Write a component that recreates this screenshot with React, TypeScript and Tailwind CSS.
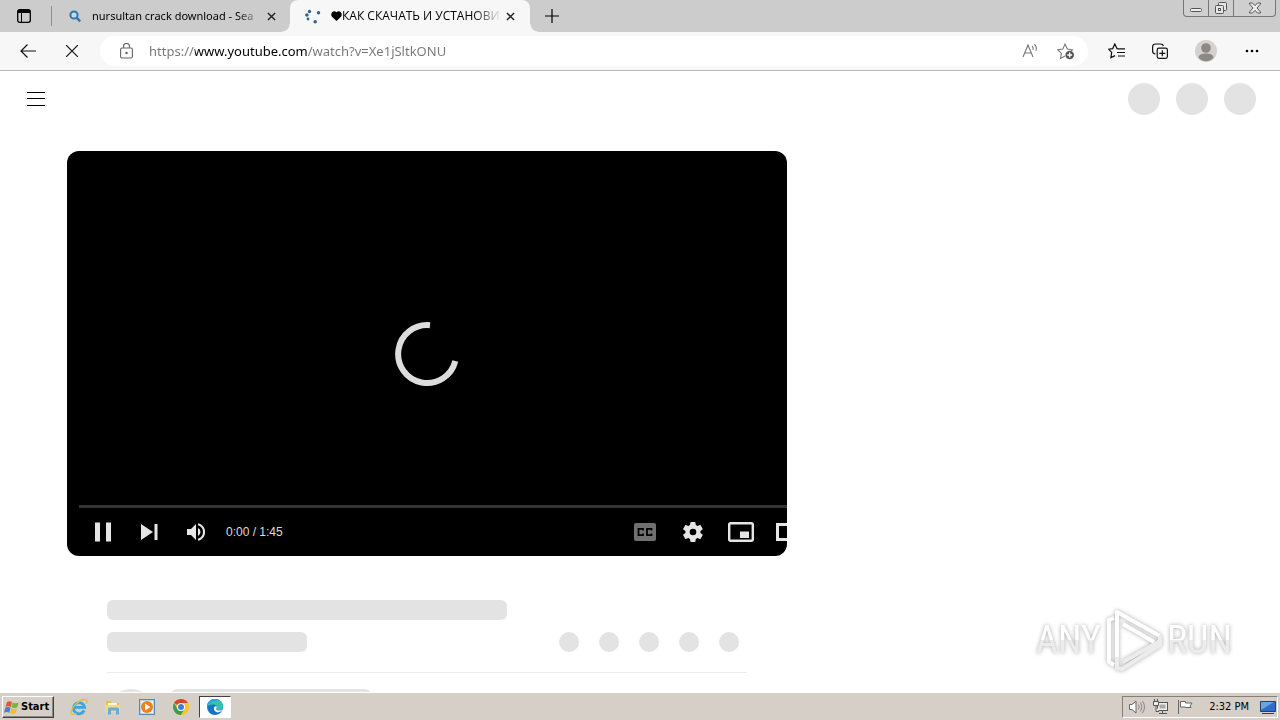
import type { ReactNode } from "react";

const UI_FONT = "font-['Open_Sans','Noto_Sans',sans-serif]";

function IconButton({ label, className, children }: { label: string; className: string; children: ReactNode }) {
  return (
    <button type="button" aria-label={label} className={`flex shrink-0 items-center justify-center ${className}`}>
      {children}
    </button>
  );
}

function CloseIcon() {
  return (
    <svg width="9" height="9" viewBox="0 0 10 10" stroke="#222" strokeWidth="1.6">
      <path d="M1 1l8 8M9 1L1 9" />
    </svg>
  );
}

function TabStrip() {
  return (
    <div className="flex h-8 shrink-0 items-start bg-[#cccccc]">
      <IconButton label="Tab actions" className="h-8 w-12">
        <svg width="14" height="14" viewBox="0 0 14 14" fill="none" stroke="#000">
          <rect x=".7" y=".7" width="12.6" height="12.6" rx="2" strokeWidth="1.3" />
          <path d="M1 2.5h12" strokeWidth="3" />
          <path d="M4.5 4v9" />
        </svg>
      </IconButton>
      <div className="mt-1.5 ml-[3px] h-5 w-px bg-[#8f8f8f]" />

      {/* Background tab */}
      <div className="flex h-8 w-[238px] shrink-0 items-center pl-4">
        <svg className="shrink-0" width="14" height="16" viewBox="0 0 14 16" fill="none" stroke="#3475ad" strokeWidth="2">
          <circle cx="6" cy="7" r="3.6" fill="#b9ddf4" />
          <path d="M8.6 9.6l3.6 3.8" strokeWidth="2.4" />
        </svg>
        <span className="ml-2.5 w-[168px] font-['Noto_Sans',sans-serif] text-[11px] leading-4 whitespace-nowrap text-black [mask-image:linear-gradient(90deg,#000_145px,transparent_170px)]">
          nursultan crack download - Sea
        </span>
        <IconButton label="Close tab" className="ml-px size-5">
          <CloseIcon />
        </IconButton>
      </div>

      {/* Active tab */}
      <div className="relative flex h-8 w-60 shrink-0 items-center rounded-t-lg bg-[#f7f7f7] pl-[15px]">
        <span className="absolute bottom-0 -left-2 size-2 bg-[radial-gradient(circle_at_0_0,#cccccc_7px,#f7f7f7_8px)]" />
        <span className="absolute -right-2 bottom-0 size-2 bg-[radial-gradient(circle_at_100%_0,#cccccc_7px,#f7f7f7_8px)]" />
        <svg className="shrink-0" width="16" height="16" viewBox="0 0 16 16" fill="#2b6695">
          <circle cx="4.5" cy="3.5" r="1.7" />
          <circle cx="1.9" cy="7" r="1.8" />
          <circle cx="3" cy="11" r="1.4" />
          <circle cx="13.5" cy="4.8" r="1.7" />
          <circle cx="10.2" cy="13.8" r="1.8" />
        </svg>
        <svg className="ml-2.5 shrink-0" width="11" height="10" viewBox="0 0 11 10" aria-label="heart">
          <path d="M5.5 10L1 5.7C-1.4 2.7 2.5-1.7 5.5 1.3 8.5-1.7 12.4 2.7 10 5.7z" />
        </svg>
        <span className="w-[158px] text-[12px] leading-4 whitespace-nowrap text-black [mask-image:linear-gradient(90deg,#000_132px,transparent_160px)]">
          КАК СКАЧАТЬ И УСТАНОВИ
        </span>
        <IconButton label="Close tab" className="size-5">
          <CloseIcon />
        </IconButton>
      </div>
      <IconButton label="New tab" className="ml-1 h-8 w-9">
        <svg width="14" height="14" viewBox="0 0 14 14" stroke="#000" strokeWidth="1.2">
          <path d="M7 0v14M0 7h14" />
        </svg>
      </IconButton>

      {/* Window controls */}
      <div className="mr-1 ml-auto flex h-[17px] rounded-b border border-t-0 border-[#777] bg-[#cfcfcf]">
        <IconButton label="Minimize" className="w-[25px] border-r border-[#777]">
          <svg width="12" height="16" viewBox="0 0 12 16" fill="#eee" stroke="#555">
            <rect x=".5" y="8.5" width="11" height="3" rx="1" />
          </svg>
        </IconButton>
        <IconButton label="Restore" className="w-[25px] border-r border-[#777]">
          <svg width="14" height="16" viewBox="0 0 14 16" fill="#e6e6e6" stroke="#555">
            <rect x="4.5" y="2.5" width="8" height="8" rx="1" />
            <rect x="1.5" y="5.5" width="8" height="8" rx="1" />
            <rect x="4.5" y="8.5" width="2" height="2" fill="#fff" />
          </svg>
        </IconButton>
        <IconButton label="Close window" className="w-[41px]">
          <svg width="14" height="12" viewBox="0 0 14 12" fill="#eee" stroke="#555">
            <path d="M1.5 1h3L7 3.7 9.5 1h3v1L9 6l3.5 4v1h-3L7 8.3 4.5 11h-3v-1L5 6 1.5 2z" />
          </svg>
        </IconButton>
      </div>
    </div>
  );
}

function Toolbar() {
  return (
    <div className="flex h-[39px] shrink-0 items-center border-b border-[#b9b9b9] bg-[#f7f7f7] pl-1.5">
      <IconButton label="Back" className="h-8 w-11">
        <svg width="16" height="14" viewBox="0 0 16 14" fill="none" stroke="#111" strokeWidth="1.2">
          <path d="M16 7H1M7.5 .5L1 7l6.5 6.5" />
        </svg>
      </IconButton>
      <IconButton label="Stop loading" className="h-8 w-11">
        <svg width="12" height="12" viewBox="0 0 12 12" stroke="#111" strokeWidth="1.2">
          <path d="M0 0l12 12M12 0L0 12" />
        </svg>
      </IconButton>
      <div className="ml-1.5 flex h-[30px] flex-1 items-center rounded-full bg-white pr-1 pl-5">
        <svg className="shrink-0" width="13" height="16" viewBox="0 0 13 16" fill="none" stroke="#666" strokeWidth="1.1">
          <rect x=".6" y="5" width="11.8" height="10" rx="1.5" />
          <path d="M3.5 5V3.5a3 3 0 0 1 6 0V5" />
          <circle cx="6.5" cy="10" r=".7" fill="#555" />
        </svg>
        {/* Host part of the address is darker than the rest */}
        <input
          aria-label="Address"
          readOnly
          value="https://www.youtube.com/watch?v=Xe1jSltkONU"
          className="ml-4 min-w-0 flex-1 bg-[linear-gradient(90deg,#757575_46px,#000_46px,#000_159px,#757575_159px)] bg-clip-text font-['Noto_Sans',sans-serif] text-[13px] leading-5 text-transparent outline-none"
        />
        <IconButton label="Read aloud" className="h-7 w-9">
          <svg width="17" height="16" viewBox="0 0 17 16" fill="none" stroke="#777" strokeWidth="1.1">
            <path d="M1 14L6 2l5 12M2.8 10h6.4M10 3c1.2 1 1.5 2.3 1 4M12.3 1.2c2 1.6 2.5 4 1.6 6.6" />
          </svg>
        </IconButton>
        <IconButton label="Add to favorites" className="h-7 w-9">
          <svg width="18" height="18" viewBox="0 0 18 18" fill="none" stroke="#777" strokeWidth="1.1">
            <path d="M8 14l-4.5 2.4.9-5L.8 7.8l5-.7L8 2l2.3 5.1 5.2.7-1.4 1.4" />
            <circle cx="12.7" cy="13" r="4.3" fill="#555" stroke="none" />
            <path d="M12.7 10.6v4.8M10.3 13h4.8" stroke="#fff" strokeWidth="1.3" />
          </svg>
        </IconButton>
      </div>
      <IconButton label="Favorites" className="ml-1.5 h-8 w-11">
        <svg width="17" height="16" viewBox="0 0 17 16" fill="none" stroke="#111" strokeWidth="1.2">
          <path d="M10 5.8l-1-.2L6.8 1 4.7 5.6l-4 .6 3 3.2-.8 5.2 4.2-2M10 5.8h7M9 9.5h8M10 13h7" />
        </svg>
      </IconButton>
      <IconButton label="Collections" className="h-8 w-11">
        <svg width="16" height="16" viewBox="0 0 16 16" fill="none" stroke="#111" strokeWidth="1.2">
          <path d="M3.4 10.8C1.5 10.8.6 9.8.6 8V4c0-2 1.2-3 3-3h5c1.6 0 2.5.6 2.8 2" />
          <rect x="5.2" y="5.2" width="10.2" height="10.2" rx="1.8" />
          <path d="M10.3 7.3v6M7.3 10.3h6" />
        </svg>
      </IconButton>
      <IconButton label="Profile" className="ml-0.5 h-8 w-11">
        <svg width="22" height="22" viewBox="0 0 22 22">
          <circle cx="11" cy="11" r="11" fill="#d4d1ce" />
          <circle cx="11" cy="8" r="4.8" fill="#8c8885" />
          <path d="M3.5 17.5c.3-2.6 3-4 7.5-4s7.2 1.4 7.5 4c-1.8 2.5-4.5 3.8-7.5 3.8s-5.7-1.3-7.5-3.8z" fill="#8c8885" />
        </svg>
      </IconButton>
      <IconButton label="Settings and more" className="mr-1.5 ml-0.5 h-8 w-11">
        <svg width="14" height="4" viewBox="0 0 14 4">
          <circle cx="2" cy="2" r="1.3" />
          <circle cx="7" cy="2" r="1.3" />
          <circle cx="12" cy="2" r="1.3" />
        </svg>
      </IconButton>
    </div>
  );
}

function Player() {
  return (
    <section aria-label="Video player" className="flex aspect-video w-[720px] flex-col overflow-hidden rounded-xl bg-black">
      <div className="flex flex-1 items-end justify-center pb-[118px]">
        <svg width="66" height="66" viewBox="0 0 66 66" fill="none" stroke="#dddddd" strokeWidth="6">
          <path d="M36 4.2A29 29 0 1 0 61.3 40" />
        </svg>
      </div>
      <div className="ml-3 h-[3px] shrink-0 bg-[#333333]" />
      <div className="ml-3 flex h-12 w-[734px] shrink-0 items-center text-[#e6e6e6]">
        <IconButton label="Pause" className="h-12 w-[47px]">
          <svg width="16" height="20" viewBox="0 0 16 20" fill="currentColor">
            <path d="M0 .5h5v19H0zM11 .5h5v19h-5z" />
          </svg>
        </IconButton>
        <IconButton label="Next" className="h-12 w-[46px]">
          <svg width="17" height="16" viewBox="0 0 17 16" fill="currentColor">
            <path d="M0 0l12 8-12 8zM13.5 0h3v16h-3z" />
          </svg>
        </IconButton>
        <IconButton label="Mute" className="h-12 w-12">
          <svg width="18" height="18" viewBox="0 0 18 18" fill="currentColor">
            <path d="M0 6v6h4l5 5V1L4 6zM13.5 9A4.5 4.5 0 0 0 11 5v8a4.5 4.5 0 0 0 2.5-4zM11 .2v2.1a7 7 0 0 1 0 13.4v2.1a9 9 0 0 0 0-17.6z" />
          </svg>
        </IconButton>
        <span className="ml-1.5 font-['Liberation_Sans',sans-serif] text-[12px] leading-4 text-[#dddddd]">0:00 / 1:45</span>
        <IconButton label="Subtitles" className="ml-auto h-12 w-12">
          <svg width="22" height="18" viewBox="0 0 22 18">
            <rect width="22" height="18" rx="2" fill="#707070" />
            <path d="M9 7.5V5.8H4.5v6.4H9v-1.7M17.5 7.5V5.8H13v6.4h4.5v-1.7" fill="none" stroke="#000" strokeWidth="1.8" />
          </svg>
        </IconButton>
        <IconButton label="Settings" className="h-12 w-12">
          <svg width="20" height="20" viewBox="2 2 20 20" fill="currentColor">
            <path d="M19.4 13a7.6 7.6 0 0 0 0-2l2.1-1.6a.5.5 0 0 0 .1-.7l-2-3.4a.5.5 0 0 0-.6-.2l-2.5 1a7.3 7.3 0 0 0-1.7-1l-.4-2.7A.5.5 0 0 0 13.9 2h-4a.5.5 0 0 0-.5.4L9 5.1a7.7 7.7 0 0 0-1.7 1l-2.5-1a.5.5 0 0 0-.6.2l-2 3.4a.5.5 0 0 0 .1.7L4.5 11a7.6 7.6 0 0 0 0 2l-2.2 1.6a.5.5 0 0 0-.1.7l2 3.4c.1.2.4.3.6.2l2.5-1c.5.4 1.1.7 1.7 1l.4 2.7c0 .2.2.4.5.4h4c.3 0 .5-.2.5-.4l.4-2.7a7.3 7.3 0 0 0 1.7-1l2.5 1c.2.1.5 0 .6-.2l2-3.4a.5.5 0 0 0-.1-.7zM12 15.3a3.3 3.3 0 1 1 0-6.6 3.3 3.3 0 0 1 0 6.6z" />
          </svg>
        </IconButton>
        <IconButton label="Miniplayer" className="h-12 w-12">
          <svg width="26" height="20" viewBox="0 0 26 20">
            <rect x="1.2" y="1.2" width="23.6" height="17.6" rx="1.5" fill="none" stroke="currentColor" strokeWidth="2.4" />
            <path d="M12 9.5h9v6.5h-9z" fill="currentColor" />
          </svg>
        </IconButton>
        <IconButton label="Theater mode" className="h-12 w-12">
          <svg width="26" height="18" viewBox="0 0 26 18" fill="none" stroke="currentColor" strokeWidth="3">
            <rect x="1.5" y="1.5" width="23" height="15" />
          </svg>
        </IconButton>
      </div>
    </section>
  );
}

function VideoSkeleton() {
  return (
    <div className="mt-11 ml-10 w-[640px]">
      <div className="h-5 w-[400px] rounded-md bg-[#e3e3e3]" />
      <div className="mt-3 flex items-center justify-between pr-2">
        <div className="h-5 w-[200px] rounded-md bg-[#e3e3e3]" />
        <div className="flex gap-5">
          {[0, 1, 2, 3, 4].map((i) => (
            <div key={i} className="size-5 rounded-full bg-[#e3e3e3]" />
          ))}
        </div>
      </div>
      <div className="mt-5 flex gap-4 border-t border-[#ececec] pt-4">
        <div className="size-12 rounded-full bg-[#e3e3e3]" />
        <div className="h-5 w-[200px] rounded-md bg-[#e3e3e3]" />
      </div>
    </div>
  );
}

function Watermark() {
  return (
    <div className="absolute right-12 bottom-5 flex items-center font-['Liberation_Sans_Narrow','Roboto_Condensed','Liberation_Sans',sans-serif] text-[38px] leading-[60px] [filter:drop-shadow(0_0_2px_#aaaaaa)]">
      <span className="bg-[linear-gradient(#ffffff_50%,#ececec_50%)] bg-clip-text text-transparent">ANY</span>
      <svg className="mr-1 ml-0.5" width="60" height="64" viewBox="0 0 60 64" fill="none" stroke="#fff" strokeWidth="4" strokeLinejoin="round">
        <path d="M11 10l-5 2v42l5 3" />
        <path d="M14 49V4l43 24" />
        <path d="M20 16l31 18" />
        <path d="M57 28v5L20 54M14 49v11l5 1 38-24v-4" stroke="#ececec" />
      </svg>
      <span className="bg-[linear-gradient(#ffffff_50%,#ececec_50%)] bg-clip-text text-transparent">RUN</span>
    </div>
  );
}

function Taskbar() {
  return (
    <footer className="flex h-7 shrink-0 items-center border-t border-white bg-[#d6cfc7] px-0.5 pt-px shadow-[0_-1px_0_#cfcdc5]">
      <button type="button" className="flex h-[22px] w-[52px] items-center border border-t-white border-r-[#404040] border-b-[#404040] border-l-white pl-px font-['DejaVu_Sans_Condensed','Noto_Sans',sans-serif] text-[11px] leading-4 font-bold text-black shadow-[inset_-1px_-1px_0_#8c8880]">
        <svg className="mr-0.5 shrink-0" width="15" height="15" viewBox="0 0 15 15">
          <path d="M3 2c2-1.2 3.5-1 5 0L6.8 7C5 6 3.5 6 1.5 7z" fill="#e2572b" />
          <path d="M8.7 2.4c2 1 3.5 1 6 0L13.3 7.3c-2 1-3.7 1-5.8 0z" fill="#79b43c" />
          <path d="M1.3 7.8c2-1 3.5-.9 5.3 0L5.3 12.7C3.5 11.8 2 12 0 12.7z" fill="#4384c8" />
          <path d="M7.3 8.2c2 1 3.7 1 5.7 0L11.7 13c-2 1-3.7 1-5.7 0z" fill="#f1bd31" />
        </svg>
        Start
      </button>
      <nav aria-label="Quick launch" className="ml-2 flex items-center">
        <IconButton label="Internet Explorer" className="h-[22px] w-[34px]">
          <svg width="18" height="18" viewBox="0 0 18 18" fill="none">
            <path d="M14.2 12.4A5.6 5.6 0 1 1 14.6 9.4H5" stroke="#3ba5dc" strokeWidth="2.8" />
            <path d="M1.5 16C-1 12 10-1 16.5 2c1 .8.6 2.3-.2 3.6M1.5 16c1.2 1 3 .2 4.800-.8" stroke="#e2bd45" strokeWidth="1.3" />
          </svg>
        </IconButton>
        <IconButton label="File Explorer" className="h-[22px] w-[34px]">
          <svg width="16" height="16" viewBox="0 0 16 16">
            <path d="M1 2h5l1 2h7v9H1z" fill="#e0bf5c" />
            <path d="M3 4h9v4H3z" fill="#fff7d1" />
            <path d="M0 6h15v7H0z" fill="#f0d987" />
            <path d="M3 15.500V10q0-1.500 1.500-1.500h8q1.500 0 1.500 1.500v5.500h-3v-4H6v4z" fill="#66aed4" />
          </svg>
        </IconButton>
        <IconButton label="Media Player" className="h-[22px] w-[34px]">
          <svg width="16" height="16" viewBox="0 0 16 16">
            <rect x=".5" y=".5" width="15" height="15" fill="#b8d6ec" stroke="#5589b5" />
            <rect x="2" y="2" width="12" height="12" fill="#e4f0f7" />
            <circle cx="8" cy="8" r="6" fill="#ed821c" />
            <path d="M6 4.5L11.5 8 6 11.5z" fill="#fff" />
          </svg>
        </IconButton>
        <IconButton label="Chrome" className="h-[22px] w-[34px]">
          <svg width="16" height="16" viewBox="0 0 16 16">
            <circle cx="8" cy="8" r="8" fill="#f4c52c" />
            <path d="M8 8L1.1 4A8 8 0 0 1 14.9 4z" fill="#dc4131" />
            <path d="M1.1 4A8 8 0 0 0 8 16l3.5-6L8 8 4.5 10z" fill="#3b9d50" />
            <path d="M8 4h6.9A8 8 0 0 1 8 16l3.5-6z" fill="#f4c52c" />
            <circle cx="8" cy="8" r="4" fill="#fff" />
            <circle cx="8" cy="8" r="3" fill="#3f7de0" />
          </svg>
        </IconButton>
        <IconButton label="Edge" className="ml-px h-[22px] w-8 border border-t-[#404040] border-r-white border-b-white border-l-[#404040] bg-white">
          <svg width="16" height="16" viewBox="0 0 16 16">
            <circle cx="8" cy="8" r="8" fill="#1675c4" />
            <path d="M0 8C0 3 3.5 0 8 0c5 0 8 3.5 8 7 0 3-2 4-4 4-2.5 0-3-1-2.2-2C10.5 7.5 9 5.500 6 5.500 3 5.500.8 6.500 0 8z" fill="#36bfb3" />
            <path d="M0 8C0 3 3.500 0 8 0c2 0 3.500.6 4.500 1.300C8 1 3 3 0 8z" fill="#2aa5e0" />
            <path d="M9.500 9c-.8 1.200 0 2.600 2.500 2.600 1.300 0 2.400-.3 3.200-1-1 3.400-7 4-8.200 0C6.500 8.800 7.500 7 9 7.200c.8.300 1 1 .5 1.800z" fill="#fff" />
          </svg>
        </IconButton>
      </nav>
      <div className="ml-auto flex h-[22px] items-center border border-t-[#85817a] border-r-white border-b-white border-l-[#85817a] pl-1.5">
        <IconButton label="Volume" className="h-5 w-4">
          <svg width="16" height="14" viewBox="0 0 16 14" fill="#fff" stroke="#666">
            <path d="M.5 4.5h2.5l4-3.5v12L3 9.5H.5z" />
            <path d="M9.5 4.5q1.5 2.500 0 5M11.5 2.5q3 4.500 0 9M13.5 1q4 6 0 12" fill="none" stroke="#888" />
          </svg>
        </IconButton>
        <IconButton label="Network" className="ml-2 h-5 w-4">
          <svg width="16" height="16" viewBox="0 0 16 16" fill="#eee" stroke="#555">
            <rect x="4.5" y="3.5" width="10" height="8" />
            <path d="M6.5 5.5h6v4h-6z" fill="#aaa" stroke="none" />
            <path d="M6 14.5h8M9.5 12v2M.5 2.5h5v4h-5zM1.5 0v2M4.5 0v2M3 7v5.5h3" />
          </svg>
        </IconButton>
        <IconButton label="Action Center" className="ml-2 h-5 w-4">
          <svg width="16" height="16" viewBox="0 0 16 16" fill="#fff" stroke="#666">
            <path d="M1.5 1v14M3.500 2.500h5v1.500h6.500l-2 3 1 1.500H8.500V8h-5z" />
          </svg>
        </IconButton>
        <time className="ml-4 font-['DejaVu_Sans_Condensed','Liberation_Sans',sans-serif] text-[11px] leading-4 text-black">2:32 PM</time>
        <IconButton label="Show desktop" className="ml-2.5 h-5 w-[18px]">
          <svg width="16" height="13" viewBox="0 0 16 13">
            <path d="M.5.5h15v10H.5z" fill="#2f6cc4" stroke="#24406f" />
            <path d="M1 1h13L1 9z" fill="#6aa5e3" />
            <path d="M2 12.5h12" stroke="#24406f" />
          </svg>
        </IconButton>
      </div>
    </footer>
  );
}

export default function App() {
  return (
    <div className={`flex h-screen flex-col overflow-hidden bg-white ${UI_FONT}`}>
      <TabStrip />
      <Toolbar />
      <main className="relative min-h-0 flex-1 overflow-hidden bg-white">
        <header className="flex h-14 items-center justify-between px-6">
          <IconButton label="Menu" className="size-6">
            <svg width="18" height="14" viewBox="0 0 18 14" stroke="#000" strokeWidth="1">
              <path d="M0 .5h18M0 6.5h18M0 13.5h18" />
            </svg>
          </IconButton>
          <div className="flex gap-4">
            <div className="size-8 rounded-full bg-[#e3e3e3]" />
            <div className="size-8 rounded-full bg-[#e3e3e3]" />
            <div className="size-8 rounded-full bg-[#e3e3e3]" />
          </div>
        </header>
        <div className="mt-6 ml-[67px]">
          <Player />
          <VideoSkeleton />
        </div>
        <Watermark />
      </main>
      <Taskbar />
    </div>
  );
}
